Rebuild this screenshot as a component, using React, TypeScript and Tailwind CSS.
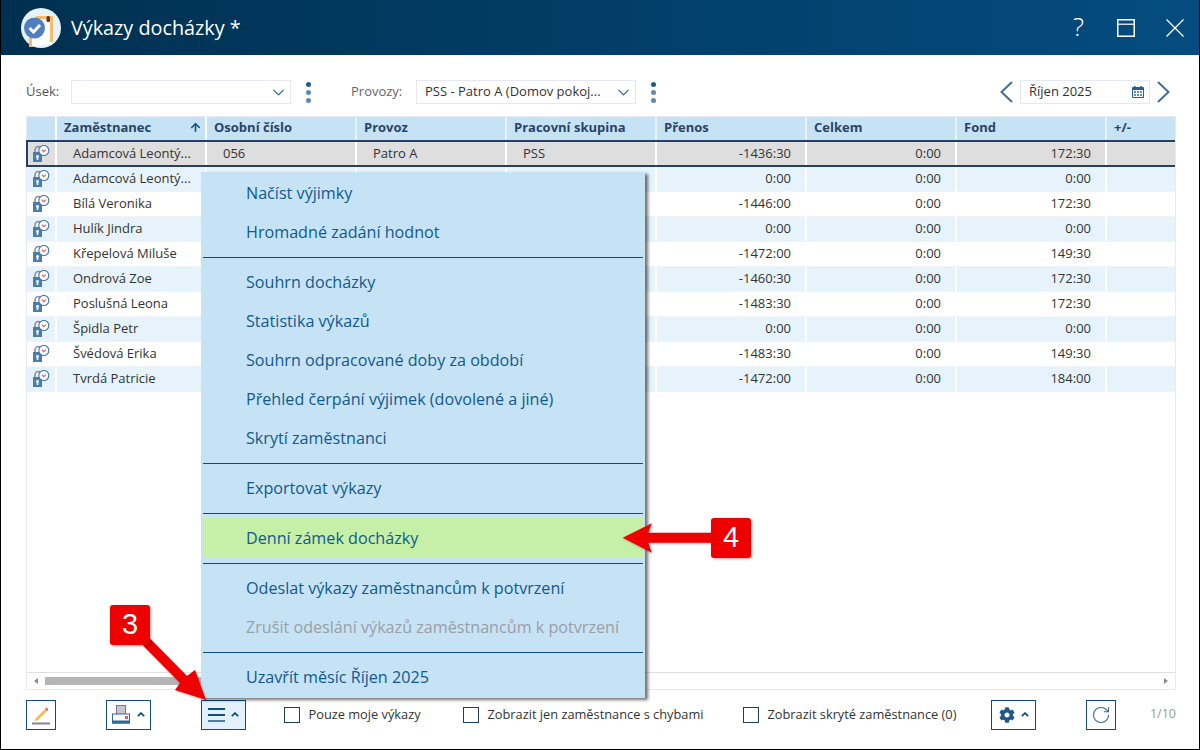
import React from 'react';
import { ArrowUp, ChevronDown, RotateCw } from 'lucide-react';
import { FaCog } from 'react-icons/fa';

const rows = [
  ['Adamcová Leontý...', '-1436:30', '0:00', '172:30'],
  ['Adamcová Leontý...', '0:00', '0:00', '0:00'],
  ['Bílá Veronika', '-1446:00', '0:00', '172:30'],
  ['Hulík Jindra', '0:00', '0:00', '0:00'],
  ['Křepelová Miluše', '-1472:00', '0:00', '149:30'],
  ['Ondrová Zoe', '-1460:30', '0:00', '172:30'],
  ['Poslušná Leona', '-1483:30', '0:00', '172:30'],
  ['Špidla Petr', '0:00', '0:00', '0:00'],
  ['Švédová Erika', '-1483:30', '0:00', '149:30'],
  ['Tvrdá Patricie', '-1472:00', '0:00', '184:00'],
];

const columns = ['Osobní číslo', 'Provoz', 'Pracovní skupina', 'Přenos', 'Celkem', 'Fond', '+/-'];

function LockClock() {
  return (
    <svg width="17" height="18" viewBox="0 0 17 18" className="shrink-0">
      <path d="M2 8V5C2 2.5 4 1.5 5.5 1.5S7 2 8 3" fill="none" stroke="#8f8a9c" strokeWidth="1.6" />
      <rect x="0" y="7" width="9" height="10" fill="#4a7ea8" />
      <circle cx="4.5" cy="11.5" r="1.4" fill="#ffffff" />
      <rect x="3.7" y="11.5" width="1.6" height="3.5" fill="#ffffff" />
      <circle cx="10.8" cy="5.5" r="5" fill="#ffffff" stroke="#3f76a3" strokeWidth="1.1" />
      <path d="M8.8 4.6L10.8 6.6L12.8 4.6" fill="none" stroke="#e0566b" strokeWidth="1.1" />
    </svg>
  );
}

function Logo() {
  return (
    <svg width="40" height="40" viewBox="0 0 40 40" className="shrink-0">
      <circle cx="20" cy="20" r="20" fill="#e6f2fa" />
      <path d="M9 39V9H31V36Z" fill="#ffffff" />
      <path d="M9.5 28V39M15 9.5H30.5V34" fill="none" stroke="#f7bb6b" strokeWidth="3" />
      <rect x="25.5" y="8" width="3.5" height="6" rx="1.5" fill="#6b2f22" />
      <circle cx="13.5" cy="20" r="10.5" fill="#4f7fbe" />
      <path d="M8.5 20L12.5 24L19 17" fill="none" stroke="#ffffff" strokeWidth="3" />
    </svg>
  );
}

function Dots() {
  return (
    <div className="flex flex-col gap-[3px] w-[5px]">
      <span className="w-[5px] h-[5px] rounded-full bg-[#1d5c8f]" />
      <span className="w-[5px] h-[5px] rounded-full bg-[#5b8bb3]" />
      <span className="w-[5px] h-[5px] rounded-full bg-[#5b8bb3]" />
    </div>
  );
}

function Select({ width, value }: { width: string; value?: string }) {
  return (
    <div className={`${width} h-6 border border-[#e4e8f4] flex items-center justify-between pl-2 pr-[2px] text-[13px] text-[#333]`}>
      <span>{value}</span>
      <ChevronDown size={19} strokeWidth={1.5} className="text-[#2a6496]" />
    </div>
  );
}

function Caret() {
  return (
    <svg width="8" height="5" viewBox="0 0 8 5">
      <path d="M0.8 4.2L4 1.2L7.2 4.2" fill="none" stroke="#0f4c7d" strokeWidth="1.8" />
    </svg>
  );
}

function Arrow({ left }: { left?: boolean }) {
  return (
    <svg width="13" height="22" viewBox="0 0 13 22">
      <path d={left ? 'M12 1L1.5 11L12 21' : 'M1 1L11.5 11L1 21'} fill="none" stroke="#3f6e9c" strokeWidth="2" />
    </svg>
  );
}

function ToolButton({ children, active, className }: { children: React.ReactNode; active?: boolean; className: string }) {
  return (
    <div className={`${className} h-[30px] border border-[#0f4c7d] flex items-center justify-center gap-[6px] ${active ? 'bg-[#e1f0fa]' : 'bg-white'}`}>
      {children}
    </div>
  );
}

function Check({ label, className }: { label: string; className: string }) {
  return (
    <div className={`flex items-center gap-[8.5px] text-[12.8px] text-[#333] ${className}`}>
      <span className="w-4 h-4 border border-[#1d3f5e] bg-white" />
      <span>{label}</span>
    </div>
  );
}

function MenuItem({ label, muted, hover }: { label: string; muted?: boolean; hover?: boolean }) {
  return (
    <div className={`h-[39px] pl-[43px] pt-[2px] flex items-center text-[16.15px] ${muted ? 'text-[#9a9ea6]' : 'text-[#11598f]'} ${hover ? 'bg-[#c6f0a8]' : ''}`}>
      {label}
    </div>
  );
}

function Sep() {
  return (
    <div className="h-[11px] pt-[6px]">
      <div className="h-px w-full bg-[#0f4c7d]" />
    </div>
  );
}

function Badge({ n, className }: { n: string; className: string }) {
  return (
    <div className={`absolute w-10 h-10 rounded-[3px] bg-[#ee0000] shadow-[1px_1px_3px_rgba(0,0,0,0.35)] flex items-center justify-center text-white text-[29px] font-['Liberation_Sans',sans-serif] ${className}`}>
      {n}
    </div>
  );
}

export default function App() {
  return (
    <div className="relative w-[1200px] h-[750px] bg-white overflow-hidden border-x border-b border-black flex flex-col font-['Open_Sans',sans-serif]">
      {/* title bar */}
      <div className="-mx-px h-[55px] shrink-0 flex items-center pl-[21px] pr-[16px] bg-gradient-to-r from-[#003050] to-[#054c80] text-white">
        <Logo />
        <span className="ml-[10px] text-[19.8px]">Výkazy docházky *</span>
        <div className="ml-auto flex items-center">
          <span className="text-[26px] font-light mr-[33px] mt-[-2px]">?</span>
          <svg width="18" height="18" viewBox="0 0 18 18" className="mr-[31px]">
            <rect x="0.75" y="0.75" width="16.5" height="16.5" fill="none" stroke="#ffffff" strokeWidth="1.5" />
            <path d="M0 5.2H18" stroke="#ffffff" strokeWidth="1.2" />
          </svg>
          <svg width="18" height="18" viewBox="0 0 18 18">
            <path d="M0.5 0.5L17.5 17.5M17.5 0.5L0.5 17.5" stroke="#ffffff" strokeWidth="1.3" />
          </svg>
        </div>
      </div>

      {/* filters */}
      <div className="h-[61px] shrink-0 flex items-center pl-[25px] pr-[29px] pt-[13px] text-[13px]">
        <span className="w-[45px] text-[#555]">Úsek:</span>
        <Select width="w-[220px]" />
        <div className="ml-[15px]"><Dots /></div>
        <span className="ml-[40px] w-[65px] text-[#666]">Provozy:</span>
        <Select width="w-[220px]" value="PSS - Patro A (Domov pokoj..." />
        <div className="ml-[15px]"><Dots /></div>
        <div className="ml-auto flex items-center gap-[7px]">
          <Arrow left />
          <div className="w-[130px] h-6 border border-[#e4e8f4] flex items-center justify-between pl-2 pr-[5px] text-[#333]">
            <span>Říjen 2025</span>
            <svg width="12" height="12" viewBox="0 0 12 12">
              <rect x="0" y="1" width="12" height="11" rx="1" fill="#24608f" />
              <rect x="2" y="0" width="1.5" height="2" fill="#24608f" />
              <rect x="8.5" y="0" width="1.5" height="2" fill="#24608f" />
              <rect x="1" y="4" width="10" height="7" fill="#ffffff" />
              <path d="M2 5h2v2H2zM5 5h2v2H5zM8 5h2v2H8zM2 8h2v2H2zM5 8h2v2H5zM8 8h2v2H8z" fill="#5f8fb5" />
            </svg>
          </div>
          <Arrow />
        </div>
      </div>

      {/* table */}
      <div className="ml-[25px] w-[1150px] h-[574px] shrink-0 border border-[#e8e8f6] flex flex-col">
        <div className="h-[23px] flex bg-[#c6e3f5] text-[13px] font-bold text-[#2a4365] shrink-0">
          <div className="w-[30px] border-r-2 border-white" />
          <div className="w-[150px] border-r-2 border-white pl-[7px] pr-[3px] pb-[2px] flex items-center justify-between">
            <span>Zaměstnanec</span>
            <ArrowUp size={13} strokeWidth={3} className="text-[#17517f]" />
          </div>
          {columns.map((c) => (
            <div key={c} className="w-[150px] border-r-2 border-[#e8f0f8] pl-[7px] pb-[2px] flex items-center last:border-r-0 last:w-auto last:flex-1">
              {c}
            </div>
          ))}
        </div>

        <div className="flex-1 flex flex-col text-[13px] text-[#333] min-h-0">
          {rows.map((r, i) => (
            <div
              key={i}
              className={`flex shrink-0 ${i === 0 ? 'h-[27px] -ml-px bg-[#dedede] border-y-2 border-l-2 border-[#26405f]' : `h-[25px] ${i % 2 === 1 ? 'bg-[#e6f3fb]' : 'bg-white'} border-b border-[#eef4fa]`}`}
            >
              <div className={`${i === 0 ? 'w-[29px] pl-[5px]' : 'w-[30px] pl-[6px]'} border-r-2 border-white flex items-center`}><LockClock /></div>
              <div className="w-[150px] border-r-2 border-white pl-[16px] flex items-center">{r[0]}</div>
              <div className="w-[150px] border-r-2 border-white pl-[16px] flex items-center">{i === 0 ? '056' : ''}</div>
              <div className="w-[150px] border-r-2 border-white pl-[16px] flex items-center">{i === 0 ? 'Patro A' : ''}</div>
              <div className="w-[150px] border-r-2 border-white pl-[16px] flex items-center">{i === 0 ? 'PSS' : ''}</div>
              <div className="w-[150px] border-r-2 border-white pr-[14px] flex items-center justify-end">{r[1]}</div>
              <div className="w-[150px] border-r-2 border-white pr-[14px] flex items-center justify-end">{r[2]}</div>
              <div className="w-[150px] border-r-2 border-white pr-[14px] flex items-center justify-end">{r[3]}</div>
              <div className="flex-1" />
            </div>
          ))}
        </div>

        <div className="h-[17px] shrink-0 border-t border-[#e0e0e0] flex items-center pl-[7px] pr-[7px]">
          <span className="w-0 h-0 border-y-[3px] border-y-transparent border-r-[4px] border-r-[#888]" />
          <div className="ml-[7px] w-[400px] h-2 bg-[#b5b5b5]" />
          <span className="ml-auto w-0 h-0 border-y-[3px] border-y-transparent border-l-[4px] border-l-[#888]" />
        </div>
      </div>

      {/* toolbar */}
      <div className="flex-1 relative flex items-center pl-[25px] pr-[23px] pb-[10px]">
        <ToolButton className="w-[30px]">
          <svg width="20" height="20" viewBox="0 0 20 20">
            <path d="M4.5 13.5L14 4L16 6L6.5 15.5L4 16Z" fill="#f7bb50" />
            <path d="M14 4L15.5 2.5L17.5 4.5L16 6Z" fill="#e0566b" />
            <rect x="1" y="17.5" width="18" height="2" fill="#8a8298" />
          </svg>
        </ToolButton>
        <ToolButton className="w-[45px] ml-[50px]">
          <svg width="19" height="19" viewBox="0 0 19 19">
            <rect x="4.5" y="0.5" width="9" height="9" fill="#c9c6d3" stroke="#7b7488" />
            <rect x="0.5" y="9" width="17" height="9" fill="#ffffff" stroke="#2f6796" />
            <rect x="0" y="15.5" width="18" height="3" fill="#2f6796" />
            <rect x="13" y="11" width="3" height="3" fill="#e0566b" />
          </svg>
          <Caret />
        </ToolButton>
        <ToolButton className="w-[45px] ml-[50px]" active>
          <div className="flex flex-col gap-[4px]">
            <span className="w-[17px] h-[2px] bg-[#0f4c7d]" />
            <span className="w-[17px] h-[2px] bg-[#0f4c7d]" />
            <span className="w-[17px] h-[2px] bg-[#4a7ea8]" />
          </div>
          <Caret />
        </ToolButton>
        <Check className="ml-[38px] w-[179px]" label="Pouze moje výkazy" />
        <Check className="w-[280px]" label="Zobrazit jen zaměstnance s chybami" />
        <Check className="w-[248px]" label="Zobrazit skryté zaměstnance (0)" />
        <ToolButton className="w-[45px]">
          <FaCog size={16} className="text-[#1f5a8a]" />
          <Caret />
        </ToolButton>
        <ToolButton className="w-[30px] ml-[50px]">
          <RotateCw size={20} strokeWidth={1.3} className="text-[#2f6796]" />
        </ToolButton>
        <span className="ml-auto text-[12.5px] text-[#9a9a9a]">1/10</span>
      </div>

      {/* context menu */}
      <div className="absolute left-[200px] top-[172px] w-[444px] h-[526px] bg-[#c6e3f5] px-[2px] pt-px shadow-[3px_2px_3px_rgba(0,0,0,0.55)]">
        <MenuItem label="Načíst výjimky" />
        <MenuItem label="Hromadné zadání hodnot" />
        <Sep />
        <MenuItem label="Souhrn docházky" />
        <MenuItem label="Statistika výkazů" />
        <MenuItem label="Souhrn odpracované doby za období" />
        <MenuItem label="Přehled čerpání výjimek (dovolené a jiné)" />
        <MenuItem label="Skrytí zaměstnanci" />
        <Sep />
        <MenuItem label="Exportovat výkazy" />
        <Sep />
        <MenuItem label="Denní zámek docházky" hover />
        <Sep />
        <MenuItem label="Odeslat výkazy zaměstnancům k potvrzení" />
        <MenuItem label="Zrušit odeslání výkazů zaměstnancům k potvrzení" muted />
        <Sep />
        <MenuItem label="Uzavřít měsíc Říjen 2025" />
      </div>

      {/* annotations */}
      <svg className="absolute left-[139px] top-[635px] drop-shadow-[1px_1px_1px_rgba(0,0,0,0.3)]" width="70" height="70" viewBox="0 0 70 70">
        <path d="M10 3.5L47 41L55 35L66 65L35 55L40 48L3 10.5Z" fill="#ee0000" />
      </svg>
      <Badge n="3" className="left-[109px] top-[605px]" />
      <svg className="absolute left-[620px] top-[522px] drop-shadow-[1px_1px_1px_rgba(0,0,0,0.3)]" width="92" height="32" viewBox="0 0 92 32">
        <path d="M1.7 15.7L30.7 1.3L27.3 10.7H92V20.7H27.3L30.7 30.7Z" fill="#ee0000" />
      </svg>
      <Badge n="4" className="left-[710px] top-[518px]" />
    </div>
  );
}
